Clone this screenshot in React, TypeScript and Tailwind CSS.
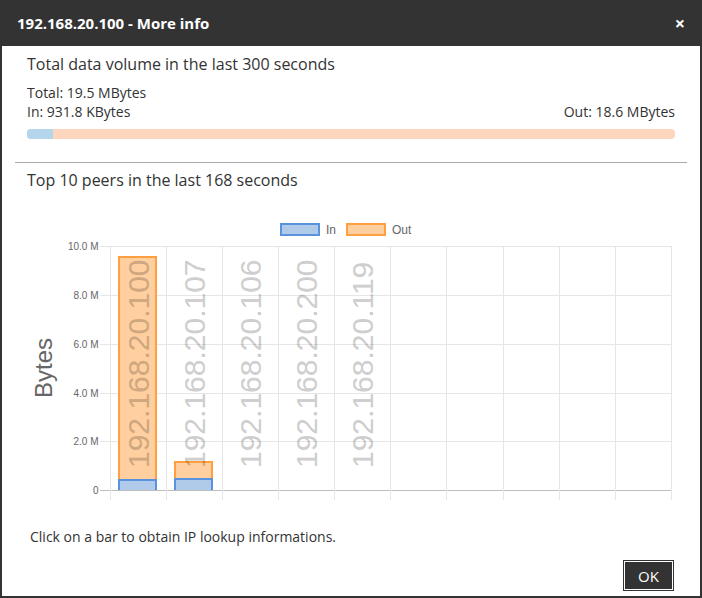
import React from "react";

const font = { fontFamily: '"Liberation Sans", Arial, sans-serif' };

function Chart() {
  const left = 110;
  const right = 672;
  const top = 246;
  const bottom = 490;
  const colW = 56.15;
  const ticks = [
    { v: "10.0 M", y: 246 },
    { v: "8.0 M", y: 295 },
    { v: "6.0 M", y: 344 },
    { v: "4.0 M", y: 393 },
    { v: "2.0 M", y: 441 },
    { v: "0", y: 490 },
  ];
  const vlines = Array.from({ length: 11 }, (_, k) => Math.floor(left + colW * k));
  const labels = [
    "192.168.20.100",
    "192.168.20.107",
    "192.168.20.106",
    "192.168.20.200",
    "192.168.20.119",
  ];
  const bars = [
    { x0: 118, x1: 157, inTop: 479, outTop: 256 },
    { x0: 174, x1: 213, inTop: 478, outTop: 461 },
  ];
  const seg = (x0: number, x1: number, y0: number, y1: number) =>
    `M ${x0 + 1} ${y1} V ${y0 + 1} H ${x1 - 1} V ${y1}`;

  return (
    <svg width={698} height={310} className="block" style={font}>
      <g transform="translate(-2,-195)">
        {/* legend */}
        <rect x={281} y={224} width={38} height={11} fill="#b0cbea" stroke="#5b92dd" strokeWidth={2} />
        <text x={326} y={234} fontSize={12} fill="#666">In</text>
        <rect x={347} y={224} width={38} height={11} fill="#ffcf9f" stroke="#ff9f40" strokeWidth={2} />
        <text x={392} y={234} fontSize={12} fill="#666">Out</text>

        {/* horizontal grid */}
        {ticks.map((t) => (
          <g key={t.v}>
            <line
              x1={100}
              x2={right}
              y1={t.y + 0.5}
              y2={t.y + 0.5}
              stroke={t.v === "0" ? "#bdbdbd" : "#e6e6e6"}
              strokeWidth={1}
            />
            <text x={98.5} y={t.y + 3.5} fontSize={10} fill="#666" textAnchor="end">
              {t.v}
            </text>
          </g>
        ))}
        {/* vertical grid */}
        {vlines.map((x, i) => (
          <line key={i} x1={x + 0.5} x2={x + 0.5} y1={top} y2={500} stroke="#e6e6e6" strokeWidth={1} />
        ))}

        {/* bars */}
        {bars.map((b, i) => (
          <g key={i}>
            <rect x={b.x0} y={b.inTop} width={b.x1 - b.x0} height={bottom - b.inTop} fill="#b0cbea" />
            <path d={seg(b.x0, b.x1, b.inTop, bottom)} fill="none" stroke="#5b92dd" strokeWidth={2} />
            <rect x={b.x0} y={b.outTop} width={b.x1 - b.x0} height={b.inTop - b.outTop} fill="#ffcf9f" />
            <path d={seg(b.x0, b.x1, b.outTop, b.inTop)} fill="none" stroke="#ff9f40" strokeWidth={2} />
          </g>
        ))}

        {/* rotated labels */}
        {labels.map((l, i) => {
          const cx = left + colW * i + colW / 2;
          return (
            <text
              key={l}
              transform={`translate(${cx + 10.7},468) rotate(-90)`}
              fontSize={30}
              fill="#000"
              fillOpacity={0.2}
              stroke="#000"
              strokeOpacity={0.08}
              strokeWidth={0.6}
            >
              {l}
            </text>
          );
        })}

        {/* axis title */}
        <text transform="translate(52,368) rotate(-90)" fontSize={24} fill="#666" textAnchor="middle">
          Bytes
        </text>
      </g>
    </svg>
  );
}

export default function App() {
  return (
    <div
      className="w-[702px] h-[598px] flex flex-col text-[#333]"
      style={{ fontFamily: '"Open Sans", "Noto Sans", sans-serif' }}
    >
      <div className="h-[46px] bg-[#333] flex items-center justify-between pl-[17px] pr-[17px] text-white">
        <div className="text-[15px] font-bold leading-[20px]">192.168.20.100 - More info</div>
        <div className="text-[18px] font-bold leading-[20px]">×</div>
      </div>
      <div className="flex-1 bg-white border-x-2 border-b-2 border-[#333] flex flex-col">
        <div className="px-[25px] pt-[8px]">
          <div className="text-[16px] leading-[21px]">Total data volume in the last 300 seconds</div>
          <div className="mt-[8px] text-[14px] leading-[19px]">
            <div>Total: 19.5 MBytes</div>
            <div className="flex justify-between">
              <span>In: 931.8 KBytes</span>
              <span>Out: 18.6 MBytes</span>
            </div>
          </div>
          <div className="mt-[8px] h-[10px] rounded-[4px] bg-[#fed5bd] flex overflow-hidden">
            <div className="w-[26px] bg-[#b4d5ec]" />
          </div>
        </div>
        <div className="mt-[23px] mx-[13px] border-t border-[#aaa]" />
        <div className="px-[25px] pt-[7px]">
          <div className="text-[16px] leading-[21px]">Top 10 peers in the last 168 seconds</div>
        </div>
        <div className="mt-[4px]">
          <Chart />
        </div>
        <div className="mt-[22px] px-[28px] text-[14px] leading-[19px]">
          Click on a bar to obtain IP lookup informations.
        </div>
        <div className="mt-[15px] flex justify-end pr-[27px]">
          <button className="w-[49px] h-[29px] bg-[#333] text-white border border-white ring-1 ring-[#333] text-[15px] leading-[20px]">
            OK
          </button>
        </div>
      </div>
    </div>
  );
}
